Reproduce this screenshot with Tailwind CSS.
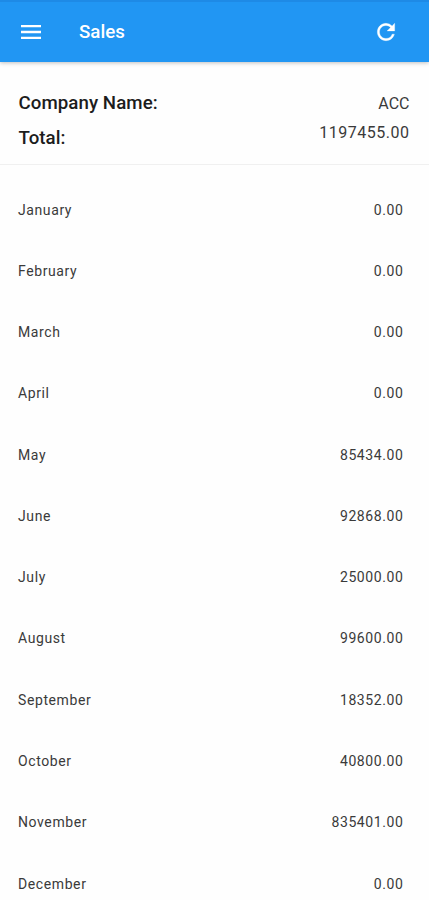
<!DOCTYPE html>
<html lang="en">
<head>
    <meta charset="UTF-8">
    <meta name="viewport" content="width=device-width, initial-scale=1.0">
    <title>Sales</title>
    <script src="https://cdn.jsdelivr.net/npm/@tailwindcss/browser@4"></script>
</head>
<body class="bg-[#fefefe] font-[Roboto,sans-serif] text-[#3a3a3a] h-[900px] overflow-hidden">
    <!-- App bar -->
    <header class="relative flex items-center h-[62px] pl-[19px] pr-[30px] pb-px bg-[#2196f3] border-t-2 border-[#1e8ae6] text-white shadow-[0_1px_4px_rgba(0,0,0,0.25)]">
        <button aria-label="Menu">
            <svg class="block w-6 h-6" viewBox="0 0 24 24" fill="currentColor"><path d="M2 19h20v-2.300H2V19zm0-5.850h20v-2.300H2v2.300zM2 5v2.300h20V5H2z"/></svg>
        </button>
        <h1 class="ml-9 pt-[2px] text-[18.700px] font-medium">Sales</h1>
        <button class="ml-auto" aria-label="Refresh">
            <svg class="block w-[26px] h-[26px]" viewBox="0 0 24 24" fill="currentColor" stroke="currentColor" stroke-width="0.3"><path d="M17.650 6.350A7.958 7.958 0 0 0 12 4c-4.420 0-7.990 3.580-7.990 8s3.570 8 7.990 8c3.730 0 6.840-2.550 7.730-6h-2.080A5.990 5.990 0 0 1 12 18c-3.310 0-6-2.690-6-6s2.690-6 6-6c1.660 0 3.140.69 4.220 1.780L13 11h7V4l-2.350 2.350z"/></svg>
        </button>
    </header>

    <main>
        <!-- Summary -->
        <section class="flex justify-between h-[103px] pt-6 pl-[18.500px] pr-[19.500px] border-b border-[#f0f0f0]">
            <div class="text-[18.700px] leading-[35px] tracking-[0.06px] font-medium text-[#1c1c1c]">
                <p>Company Name:</p>
                <p>Total:</p>
            </div>
            <div class="pt-[3px] text-right text-base leading-[29px] tracking-[0.5px]">
                <p class="tracking-[0px]">ACC</p>
                <p>1197455.00</p>
            </div>
        </section>

        <!-- Monthly sales -->
        <ul class="pt-[14px] pl-[18px] pr-[25.5px] text-sm tracking-[0.6px]">
            <li class="flex items-center justify-between h-[61.270px]"><span>January</span><span>0.00</span></li>
            <li class="flex items-center justify-between h-[61.270px]"><span>February</span><span>0.00</span></li>
            <li class="flex items-center justify-between h-[61.270px]"><span>March</span><span>0.00</span></li>
            <li class="flex items-center justify-between h-[61.270px]"><span>April</span><span>0.00</span></li>
            <li class="flex items-center justify-between h-[61.270px]"><span>May</span><span>85434.00</span></li>
            <li class="flex items-center justify-between h-[61.270px]"><span>June</span><span>92868.00</span></li>
            <li class="flex items-center justify-between h-[61.270px]"><span>July</span><span>25000.00</span></li>
            <li class="flex items-center justify-between h-[61.270px]"><span>August</span><span>99600.00</span></li>
            <li class="flex items-center justify-between h-[61.270px]"><span>September</span><span>18352.00</span></li>
            <li class="flex items-center justify-between h-[61.270px]"><span>October</span><span>40800.00</span></li>
            <li class="flex items-center justify-between h-[61.270px]"><span>November</span><span>835401.00</span></li>
            <li class="flex items-center justify-between h-[61.270px]"><span>December</span><span>0.00</span></li>
        </ul>
    </main>
</body>
</html>
